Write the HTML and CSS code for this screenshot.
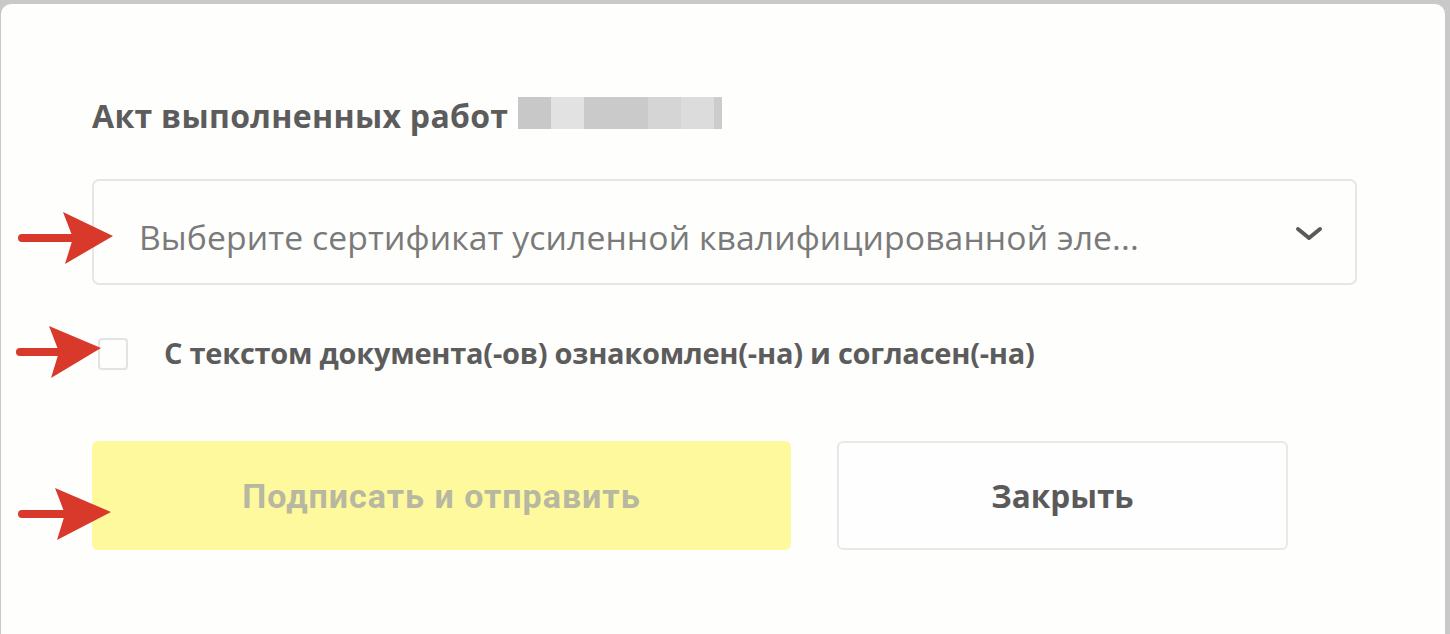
FILE: index.html
```html
<!DOCTYPE html>
<html lang="ru">
<head>
<meta charset="utf-8">
<title>Подписание</title>
<link rel="stylesheet" href="styles.css">
</head>
<body>
<div class="modal">
  <div class="title-row">
    <span class="title">Акт выполненных работ</span>
    <span class="blur"><i class="b1"></i><i class="b2"></i><i class="b3"></i><i class="b4"></i><i class="b5"></i><i class="b6"></i></span>
  </div>
  <div class="select">
    <span class="placeholder">Выберите сертификат усиленной квалифицированной эле...</span>
    <svg class="chevron" width="28" height="18" viewBox="0 0 28 18"><path d="M3 4 L14 13 L25 4" fill="none" stroke="#5a5a5a" stroke-width="4" stroke-linecap="round" stroke-linejoin="round"/></svg>
  </div>
  <label class="check-row">
    <span class="checkbox"></span>
    <span class="check-label">С текстом документа(-ов) ознакомлен(-на) и согласен(-на)</span>
  </label>
  <div class="buttons">
    <button class="btn btn-primary">Подписать и отправить</button>
    <button class="btn btn-secondary">Закрыть</button>
  </div>
  <svg class="arrow arrow-1" width="100" height="56" viewBox="0 0 100 56"><line x1="5" y1="28" x2="55" y2="28" stroke="#d8392b" stroke-width="8" stroke-linecap="round"/><polygon points="46,2 96,26 48,54 56,28" fill="#d8392b"/></svg>
  <svg class="arrow arrow-2" width="90" height="56" viewBox="0 0 90 56"><line x1="5" y1="28" x2="45" y2="28" stroke="#d8392b" stroke-width="8" stroke-linecap="round"/><polygon points="34,2 86,24 36,54 44,28" fill="#d8392b"/></svg>
  <svg class="arrow arrow-3" width="100" height="56" viewBox="0 0 100 56"><line x1="5" y1="28" x2="50" y2="28" stroke="#d8392b" stroke-width="8" stroke-linecap="round"/><polygon points="38,2 94,26 40,54 48,28" fill="#d8392b"/></svg>
</div>
</body>
</html>
```

FILE: styles.css
```css
html, body {
  margin: 0;
  padding: 0;
}
body {
  background: #c9c9c9;
  width: 1450px;
  height: 634px;
  overflow: hidden;
  font-family: "Open Sans", "Noto Sans", sans-serif;
}
.modal {
  position: relative;
  margin: 4px 5px 0 1px;
  height: 630px;
  background: #fefefd;
  border-radius: 10px 10px 0 0;
  padding: 93px 0 0 91px;
  box-sizing: border-box;
  display: flex;
  flex-direction: column;
}
.title-row {
  display: flex;
  align-items: center;
  height: 36px;
  gap: 10px;
}
.title {
  font-size: 32px;
  font-weight: 700;
  color: #5c5c5c;
  letter-spacing: 0.3px;
}
.blur {
  display: flex;
  height: 32px;
  margin-top: -4px;
}
.blur i { display: block; width: 33px; height: 32px; }
.blur .b1 { background: #c8c8c8; }
.blur .b2 { background: #e2e2e2; }
.blur .b3 { background: #cacaca; width: 64px; }
.blur .b4 { background: #d5d5d5; }
.blur .b5 { background: #dcdcdc; }
.blur .b6 { background: #cccccc; width: 8px; }
.select {
  margin-top: 46px;
  width: 1265px;
  height: 106px;
  box-sizing: border-box;
  border: 2px solid #e6e6e6;
  border-radius: 7px;
  display: flex;
  align-items: center;
  justify-content: space-between;
  padding: 0 32px 0 45px;
}
.placeholder {
  font-size: 33.7px;
  color: #7a7a7a;
  margin-top: 10px;
  letter-spacing: 0.1px;
}
.chevron { margin-top: 4px; }
.check-row {
  margin-top: 49px;
  display: flex;
  align-items: center;
  height: 36px;
}
.checkbox {
  width: 30px;
  height: 32px;
  margin-left: 6px;
  border: 2px solid #e3e3e3;
  border-radius: 4px;
  box-sizing: border-box;
  margin-top: 4px;
}
.check-label {
  margin-left: 36px;
  font-size: 29px;
  font-weight: 700;
  color: #5c5c5c;
  letter-spacing: -0.25px;
}
.buttons {
  margin-top: 71px;
  display: flex;
  gap: 46px;
}
.btn {
  height: 109px;
  border-radius: 6px;
  font-weight: 700;
  cursor: pointer;
  padding: 0;
}
.btn-primary {
  width: 699px;
  background: #fdf99c;
  border: none;
  color: #b8b7a1;
  font-family: "Roboto", sans-serif;
  font-size: 34px;
  letter-spacing: 1px;
}
.btn-secondary {
  width: 451px;
  background: #fefefe;
  border: 2px solid #e8e8e8;
  color: #5a5a5a;
  font-family: "Open Sans", "Noto Sans", sans-serif;
  font-size: 31.5px;
}
.arrow {
  position: absolute;
}
.arrow-1 { left: 16px; top: 206px; }
.arrow-2 { left: 14px; top: 320px; }
.arrow-3 { left: 16px; top: 482px; }
```
